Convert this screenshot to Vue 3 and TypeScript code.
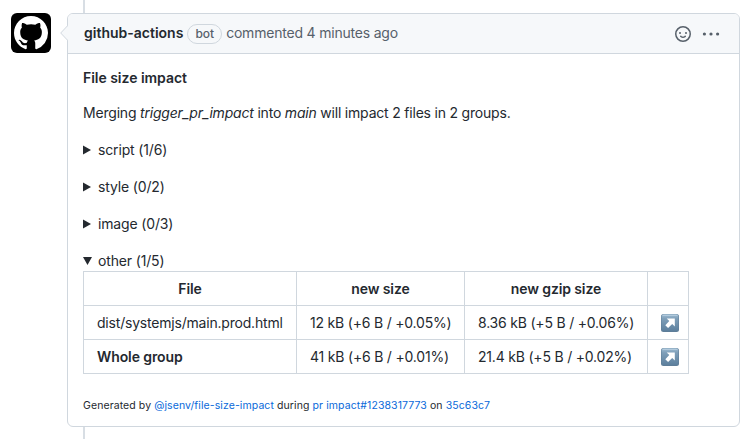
<script setup lang="ts">
interface Group {
  label: string
  changed: string
}

interface Row {
  file: string
  size: string
  gzip: string
  whole?: boolean
}

const collapsed: Group[] = [
  { label: 'script', changed: '(1/6)' },
  { label: 'style', changed: '(0/2)' },
  { label: 'image', changed: '(0/3)' },
]

const rows: Row[] = [
  { file: 'dist/systemjs/main.prod.html', size: '12 kB (+6 B / +0.05%)', gzip: '8.36 kB (+5 B / +0.06%)' },
  { file: 'Whole group', size: '41 kB (+6 B / +0.01%)', gzip: '21.4 kB (+5 B / +0.02%)', whole: true },
]
</script>

<template>
  <div class="timeline">
    <div class="avatar">
      <svg viewBox="0 0 16 16" width="34" height="34">
        <path fill="#fff" fill-rule="evenodd" d="M8 0C3.58 0 0 3.58 0 8c0 3.54 2.29 6.53 5.47 7.59.4.07.55-.17.55-.38 0-.19-.01-.82-.01-1.49-2.01.37-2.53-.49-2.69-.94-.09-.23-.48-.94-.82-1.13-.28-.15-.68-.52-.01-.53.63-.01 1.08.58 1.23.82.72 1.21 1.87.87 2.33.66.07-.52.28-.87.51-1.07-1.78-.2-3.64-.89-3.64-3.95 0-.87.31-1.59.82-2.15-.08-.2-.36-1.02.08-2.12 0 0 .67-.21 2.2.82.64-.18 1.32-.27 2-.27.68 0 1.36.09 2 .27 1.53-1.04 2.2-.82 2.2-.82.44 1.1.16 1.92.08 2.12.51.56.82 1.27.82 2.15 0 3.07-1.87 3.75-3.65 3.95.29.25.54.73.54 1.48 0 1.07-.01 1.93-.01 2.2 0 .21.15.46.55.38A8.013 8.013 0 0016 8c0-4.42-3.58-8-8-8z" />
      </svg>
    </div>
    <article class="comment">
      <svg class="caret" viewBox="0 0 8 16" width="8" height="16">
        <path d="M8 0.5L0.7 8L8 15.5z" fill="#f6f8fa" />
        <path d="M7.5 0.8L0.7 8L7.5 15.2" fill="none" stroke="#d0d7de" />
      </svg>
      <header class="header">
        <strong class="author">github-actions</strong>
        <span class="badge">bot</span>
        <span class="when">commented 4 minutes ago</span>
        <svg class="smiley" viewBox="0 0 16 16" width="16" height="16">
          <path fill="currentColor" fill-rule="evenodd" d="M1.5 8a6.5 6.5 0 1113 0 6.5 6.5 0 01-13 0zM8 0a8 8 0 100 16A8 8 0 008 0zM5 8a1 1 0 100-2 1 1 0 000 2zm7-1a1 1 0 11-2 0 1 1 0 012 0zM5.32 9.636a.75.75 0 011.038.175l.007.009c.103.118.22.222.35.31.264.178.683.37 1.285.37.602 0 1.02-.192 1.285-.371.13-.088.247-.192.35-.31l.007-.008a.75.75 0 111.222.87c-.06.08-.12.16-.205.235-.16.166-.338.316-.53.445-.474.322-1.18.63-2.127.63-.946 0-1.652-.308-2.126-.63a3.32 3.32 0 01-.715-.657l-.014-.02a.75.75 0 01.183-1.044z" />
        </svg>
        <svg class="kebab" viewBox="0 0 18 16" width="18" height="16">
          <g fill="currentColor">
            <circle cx="2.4" cy="8" r="1.6" />
            <circle cx="9" cy="8" r="1.6" />
            <circle cx="15.6" cy="8" r="1.6" />
          </g>
        </svg>
      </header>
      <div class="body">
        <h4 class="title">File size impact</h4>
        <p class="intro">Merging <em>trigger_pr_impact</em> into <em>main</em> will impact 2 files in 2 groups.</p>
        <div v-for="g in collapsed" :key="g.label" class="group">
          <svg class="marker" viewBox="0 0 10 10" width="10" height="10"><path d="M0 .5L8 5L0 9.5z" fill="currentColor" /></svg>
          <span>{{ g.label }} {{ g.changed }}</span>
        </div>
        <div class="group open">
          <svg class="marker" viewBox="0 0 10 10" width="10" height="10"><path d="M0 1H9L4.5 9z" fill="currentColor" /></svg>
          <span>other (1/5)</span>
        </div>
        <table class="sizes">
          <colgroup><col class="c-file" /><col class="c-size" /><col class="c-gzip" /><col class="c-link" /></colgroup>
          <thead>
            <tr><th>File</th><th>new size</th><th>new gzip size</th><th></th></tr>
          </thead>
          <tbody>
            <tr v-for="r in rows" :key="r.file">
              <td :class="{ whole: r.whole }">{{ r.file }}</td>
              <td>{{ r.size }}</td>
              <td>{{ r.gzip }}</td>
              <td class="link">
                <svg viewBox="0 0 18 18" width="18" height="18">
                  <defs>
                    <linearGradient id="tile" x1="0" y1="0" x2="0" y2="1">
                      <stop offset="0" stop-color="#9fbdd3" />
                      <stop offset=".25" stop-color="#7f9fb9" />
                      <stop offset="1" stop-color="#5c7f9d" />
                    </linearGradient>
                  </defs>
                  <rect width="18" height="18" rx="2.5" fill="#5f7d97" />
                  <rect x=".5" y=".3" width="17" height="17" rx="2.3" fill="url(#tile)" />
                  <path d="M2 1.3H16" stroke="#bdd3e3" stroke-width=".9" stroke-linecap="round" />
                  <path d="M5.7 4.5H13.8V12.6L11.2 10L7.1 14L4.3 11.2L8.3 7.1z" fill="#fff" />
                </svg>
              </td>
            </tr>
          </tbody>
        </table>
        <p class="footer">Generated by <a>@jsenv/file-size-impact</a> during <a>pr impact#1238317773</a> on <a>35c63c7</a></p>
      </div>
    </article>
  </div>
</template>

<style>
body {
  margin: 0;
  background: #fff;
  overflow: hidden;
}
</style>

<style scoped>
.timeline {
  box-sizing: border-box;
  width: 753px;
  height: 439px;
  padding: 13px 13px 12px 11px;
  display: flex;
  align-items: flex-start;
  gap: 16px;
  background: linear-gradient(#d8dee4, #d8dee4) 83px 0 / 2px 100% no-repeat;
  font: 14px/21px Inter, "Liberation Sans", sans-serif;
  color: #24292f;
}
.avatar {
  width: 40px;
  height: 40px;
  border-radius: 6px;
  background: #000;
  display: flex;
  align-items: center;
  justify-content: center;
}
.comment {
  box-sizing: border-box;
  position: relative;
  width: 673px;
  height: 414px;
  border: 1px solid #d0d7de;
  border-radius: 6px;
  background: #fff;
}
.caret {
  position: absolute;
  left: -8px;
  top: 11px;
}
.header {
  display: flex;
  align-items: center;
  height: 39px;
  padding: 0 19px 0 16px;
  border-bottom: 1px solid #d0d7de;
  border-radius: 5px 5px 0 0;
  background: #f6f8fa;
  color: #57606a;
}
.author {
  margin-bottom: 2px;
  font-weight: 600;
  color: #24292f;
}
.badge {
  box-sizing: border-box;
  height: 20px;
  margin: 1px 4px 0;
  padding: 0 7px;
  border: 1px solid #d0d7de;
  border-radius: 10px;
  font-size: 12px;
  font-weight: 500;
  line-height: 18px;
}
.when {
  margin-bottom: 2px;
  letter-spacing: -0.2px;
}
.smiley {
  margin: 1px 11px 0 auto;
}
.body {
  padding: 13px 15px 0;
}
.title {
  margin: 0 0 14px;
  font-size: 14px;
  font-weight: 600;
  letter-spacing: -0.03px;
}
.intro {
  margin: 0 0 16px;
  letter-spacing: -0.2px;
  white-space: nowrap;
}
.group {
  display: flex;
  align-items: center;
  height: 21px;
  gap: 5px;
  margin-bottom: 16px;
  letter-spacing: -0.15px;
}
.open {
  margin-bottom: 0;
}
.sizes {
  table-layout: fixed;
  width: 606px;
  border-collapse: collapse;
  white-space: nowrap;
}
.c-file { width: 213px; }
.c-size { width: 168px; }
.c-gzip { width: 183px; }
.c-link { width: 41px; }
th,
td {
  box-sizing: border-box;
  height: 34px;
  padding: 0 13px;
  border: 1px solid #d0d7de;
  text-align: left;
  letter-spacing: -0.2px;
}
th {
  font-weight: 600;
  text-align: center;
  letter-spacing: -0.12px;
}
.whole {
  font-weight: 600;
  letter-spacing: -0.1px;
}
.link svg {
  display: block;
}
.footer {
  margin: 21px 0 0;
  font-size: 10.5px;
  letter-spacing: 0.09px;
  white-space: nowrap;
}
a {
  color: #0969da;
}
</style>
